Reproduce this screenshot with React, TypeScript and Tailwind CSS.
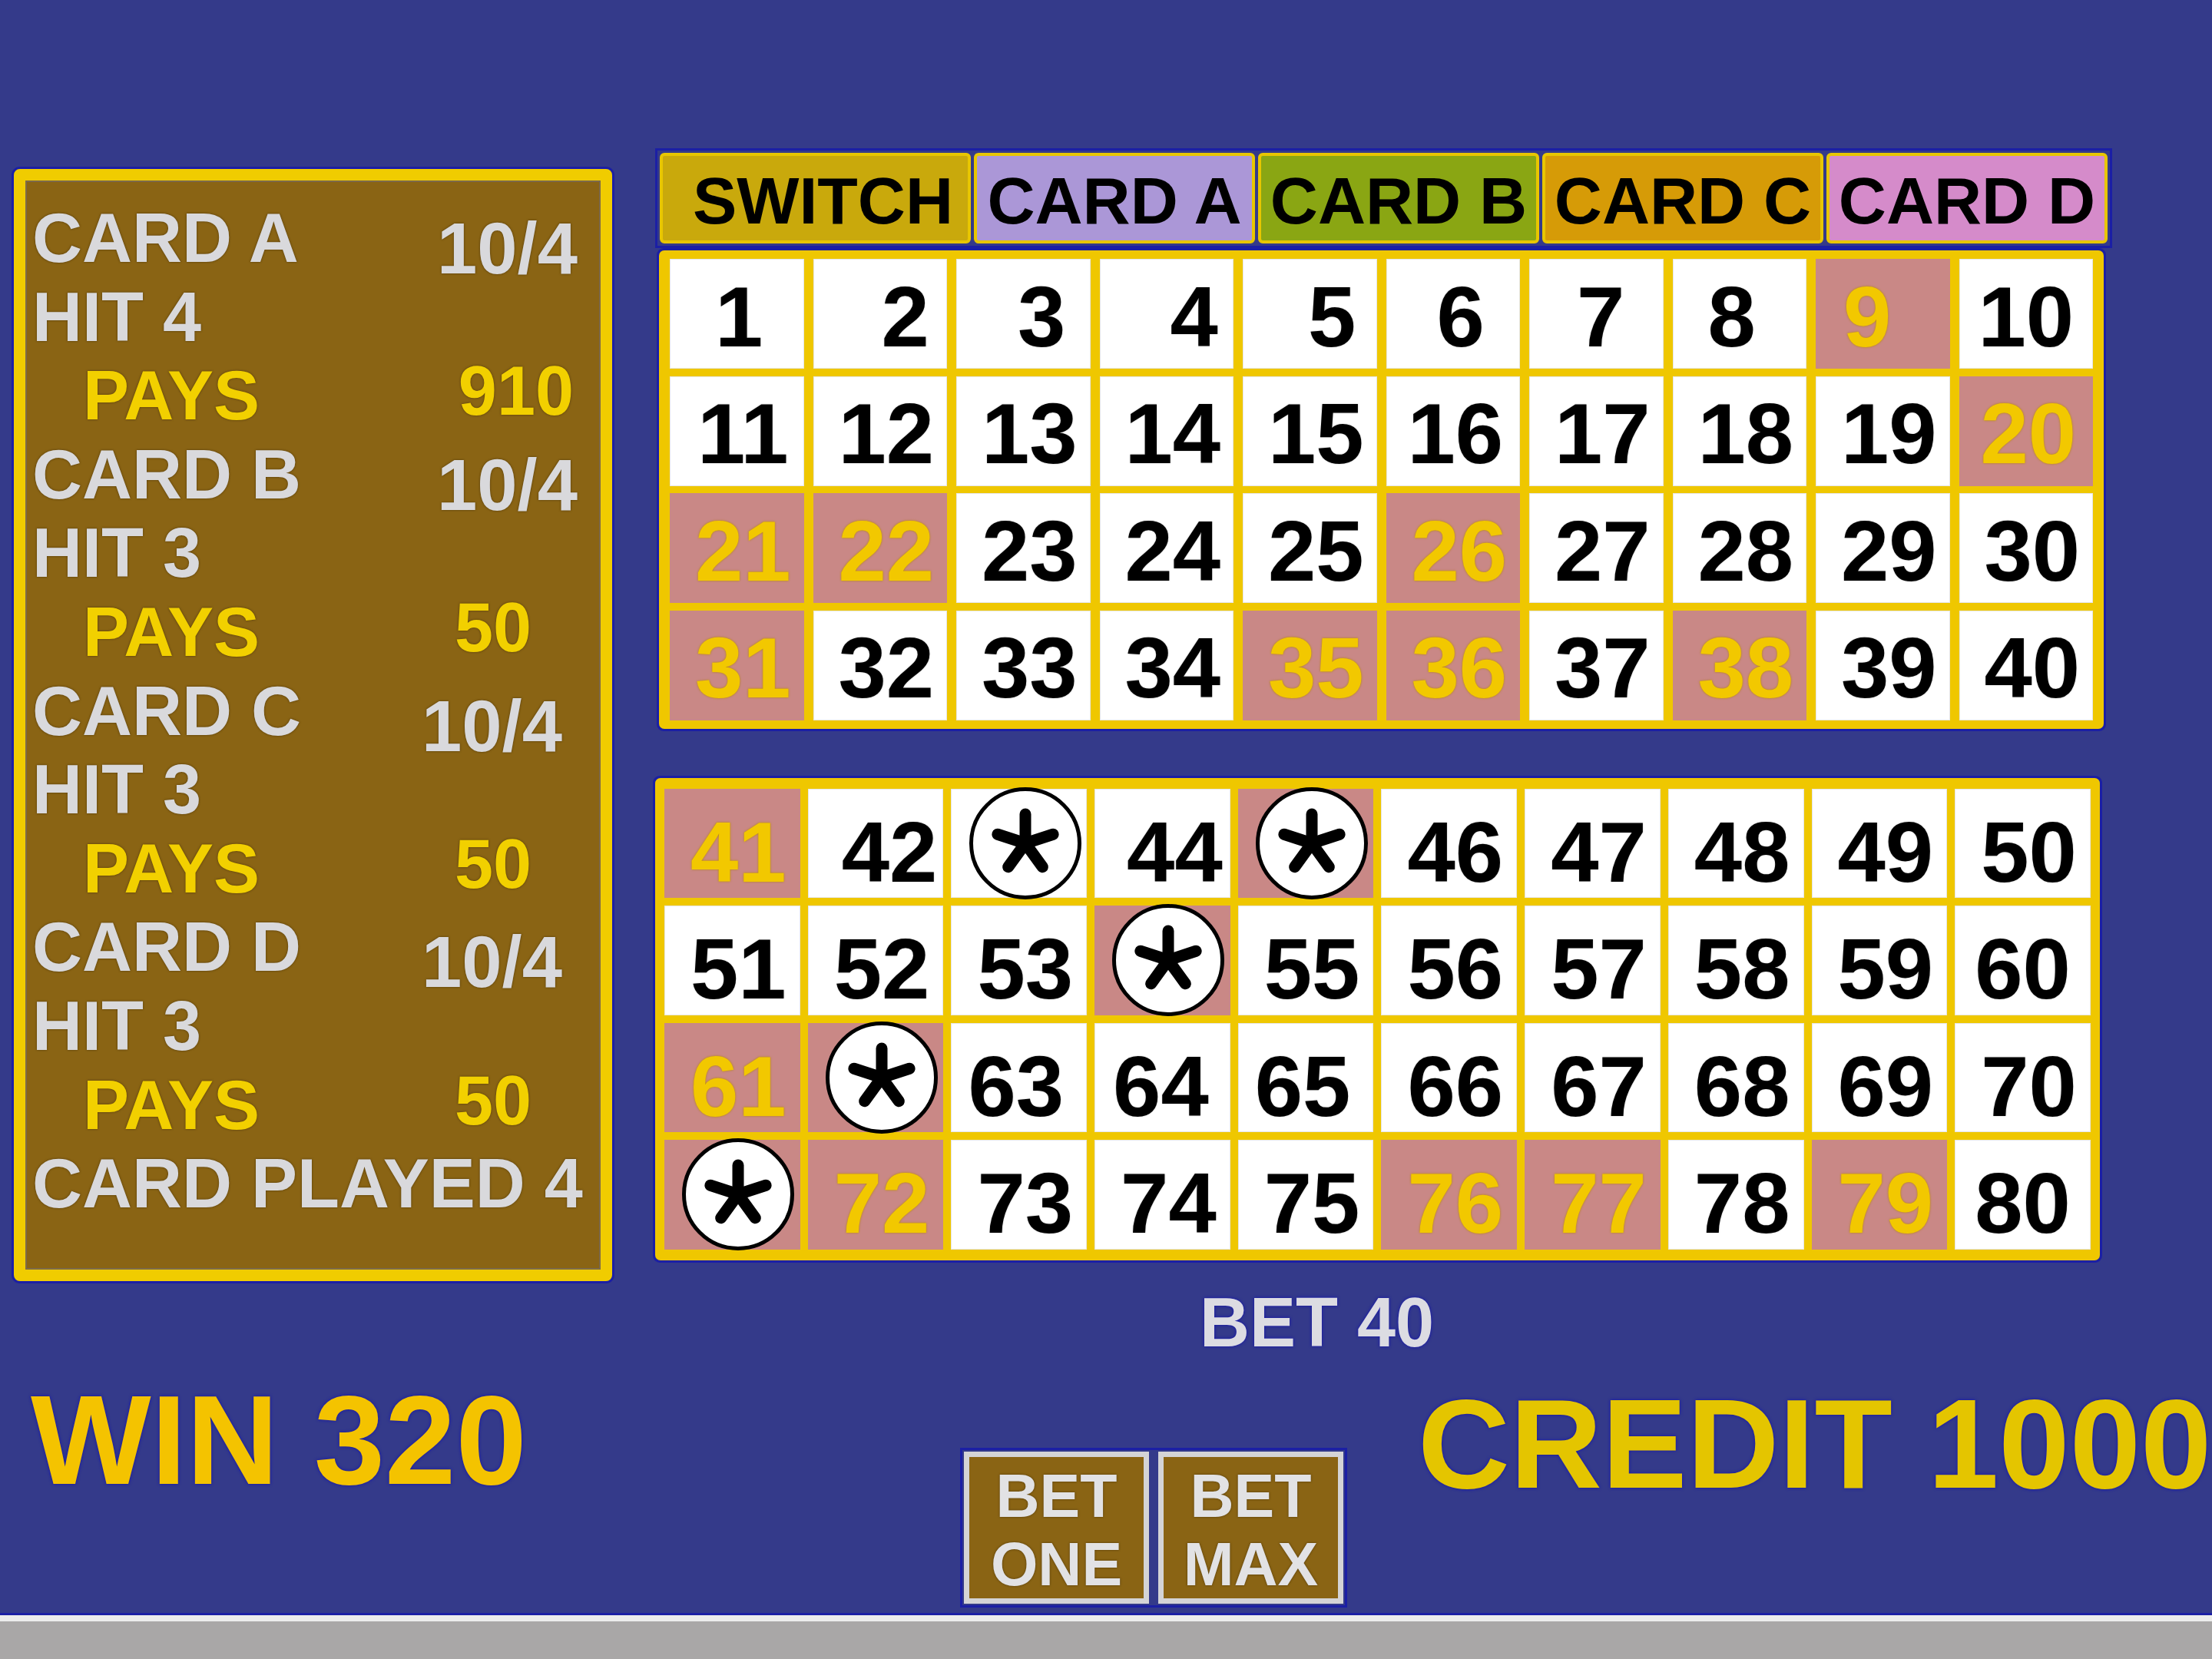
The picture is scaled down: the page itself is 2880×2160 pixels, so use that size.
import React from 'react'

// Keno board: pay table on the left, 80-number board on the right, bet/credit strip below.

const HOT = new Set([9, 20, 21, 22, 26, 31, 35, 36, 38, 41, 45, 54, 61, 62, 71, 72, 76, 77, 79])
const STARS = new Set([43, 45, 54, 62, 71])

// small horizontal nudges, the digits are not centred the same way in every cell
const NUDGE: Record<number, string> = {
  1: 'pl-[6px]',
  2: 'pl-[66px]',
  3: 'pl-[48px]',
  4: 'pl-[72px]',
  5: 'pl-[58px]',
  6: 'pl-[20px]',
  7: 'pl-[12px]',
  8: 'pr-[20px]',
  9: 'pr-[40px]',
  10: 'pl-0',
  16: 'pl-[6px]',
  20: 'pl-[6px]',
  42: 'pl-[36px]',
  44: 'pl-[32px]',
  60: 'pl-0',
  63: 'pr-[8px]',
  64: 'pr-[4px]',
  65: 'pr-[8px]',
  80: 'pl-0',
}

const HEADS = [
  { t: 'SWITCH', cls: 'w-[405px] bg-[#c9a90c] pl-[20px]' },
  { t: 'CARD A', cls: 'w-[366px] bg-[#ab97d7]' },
  { t: 'CARD B', cls: 'w-[366px] bg-[#8aa613]' },
  { t: 'CARD C', cls: 'w-[366px] bg-[#d69b07]' },
  { t: 'CARD D', cls: 'w-[366px] bg-[#d58bca]' },
]

type Row = { label: string; value?: string; pays?: boolean; vcls?: string }

const PAYTABLE: Row[] = [
  { label: 'CARD A', value: '10/4', vcls: 'pr-[28px] pt-[14px]' },
  { label: 'HIT 4' },
  { label: 'PAYS', pays: true, value: '910', vcls: 'pr-[33px] -mt-[6px]' },
  { label: 'CARD B', value: '10/4', vcls: 'pr-[28px] pt-[14px]' },
  { label: 'HIT 3' },
  { label: 'PAYS', pays: true, value: '50', vcls: 'pr-[88px] -mt-[6px]' },
  { label: 'CARD C', value: '10/4', vcls: 'pr-[48px] pt-[20px]' },
  { label: 'HIT 3' },
  { label: 'PAYS', pays: true, value: '50', vcls: 'pr-[88px] -mt-[6px]' },
  { label: 'CARD D', value: '10/4', vcls: 'pr-[48px] pt-[20px]' },
  { label: 'HIT 3' },
  { label: 'PAYS', pays: true, value: '50', vcls: 'pr-[88px] -mt-[6px]' },
  { label: 'CARD PLAYED 4' },
]

function Asterisk() {
  const arms = [-90, -18, 54, 126, 198].map((a) => {
    const r = (a * Math.PI) / 180
    return [Math.cos(r) * 38, Math.sin(r) * 38]
  })
  return (
    <svg viewBox="-50 -50 100 100" className="w-[100px] h-[100px]">
      {arms.map(([x, y], i) => (
        <line key={i} x1={0} y1={0} x2={x} y2={y} stroke="#000" strokeWidth={15} strokeLinecap="round" />
      ))}
    </svg>
  )
}

function Cell({ n, lower }: { n: number; lower?: boolean }) {
  const hot = HOT.has(n)
  return (
    <div
      className={`flex items-center justify-center ${
        hot ? 'bg-[#c98886]' : 'bg-white border border-[#e6e6e6]'
      }`}
    >
      {STARS.has(n) ? (
        <div className="shrink-0 ml-[16px] w-[146px] h-[146px] rounded-full border-[5px] border-black bg-white flex items-center justify-center">
          <Asterisk />
        </div>
      ) : (
        <span
          className={`${NUDGE[n] ?? 'pl-[16px]'} ${lower ? 'pt-[24px]' : 'pt-[8px]'} text-[112px] leading-none ${
            hot ? 'text-[#f2c800] [text-shadow:0_0_3px_#b58600]' : 'text-black [text-shadow:0_0_2px_rgba(0,0,0,0.25)]'
          }`}
        >
          {n}
        </span>
      )}
    </div>
  )
}

function PayTable() {
  return (
    <div className="ml-[18px] mt-[220px] w-[779px] h-[1448px] rounded-[8px] border-[15px] border-[#f0cc00] shadow-[0_0_0_3px_#1b1fa5]">
      <div className="h-full bg-[#8a6414] border-[2px] border-[#7d6a48] pl-[7px] pt-[22px]">
        {PAYTABLE.map((r, i) => (
          <div key={i} className="flex justify-between items-start h-[102.6px]">
            <span
              className={`text-[90px] leading-[102.6px] whitespace-nowrap [text-shadow:0_0_3px_rgba(40,25,0,0.6)] ${
                r.pays ? 'pl-[66px] text-[#f2d000]' : 'text-[#d9d9dc]'
              }`}
            >
              {r.label}
            </span>
            {r.value && (
              <span
                className={`${r.vcls} leading-[102.6px] [text-shadow:0_0_3px_rgba(40,25,0,0.6)] ${
                  r.pays ? 'text-[90px] text-[#f2d000]' : 'text-[94px] text-[#d9d9dc]'
                }`}
              >
                {r.value}
              </span>
            )}
          </div>
        ))}
      </div>
    </div>
  )
}

function Board() {
  const top = Array.from({ length: 40 }, (_, i) => i + 1)
  const bottom = Array.from({ length: 40 }, (_, i) => i + 41)
  return (
    <div className="ml-[56px] mt-[193px] flex flex-col">
      {/* header tabs */}
      <div className="w-fit border-[3px] border-[#1b1fa5] p-[3px] flex gap-[4px]">
        {HEADS.map((h) => (
          <div
            key={h.t}
            className={`${h.cls} h-[118px] pt-[6px] border-[4px] border-[#e8c600] rounded-[6px] flex items-center justify-center text-[86px] leading-none text-black whitespace-nowrap`}
          >
            {h.t}
          </div>
        ))}
      </div>

      {/* 1 - 40 */}
      <div className="ml-[2px] w-fit border-[3px] border-[#1b1fa5] rounded-[9px]">
        <div className="bg-[#efc700] rounded-[7px] px-[14px] py-[11px]">
          <div className="grid grid-cols-[repeat(10,174.5px)] auto-rows-[143px] gap-x-[12px] gap-y-[9.5px]">
            {top.map((n) => (
              <Cell key={n} n={n} />
            ))}
          </div>
        </div>
      </div>

      {/* 41 - 80 */}
      <div className="-ml-[3px] mt-[58px] w-fit border-[3px] border-[#1b1fa5] rounded-[9px]">
        <div className="bg-[#efc700] rounded-[7px] px-[12px] py-[14px]">
          <div className="grid grid-cols-[repeat(10,176.7px)] auto-rows-[142.5px] gap-x-[10px] gap-y-[10px]">
            {bottom.map((n) => (
              <Cell key={n} n={n} lower />
            ))}
          </div>
        </div>
      </div>

      <p className="ml-[709px] mt-[33px] text-[90px] leading-none text-[#dcdce2] whitespace-nowrap [text-shadow:0_0_4px_#1010b0]">
        BET 40
      </p>
    </div>
  )
}

function BetButton({ top, bottom }: { top: string; bottom: string }) {
  return (
    <div className="w-[241px] h-[198px] border-[7px] border-[#d4d4d6] bg-[#8a6414] flex flex-col items-center justify-center pt-[6px] text-[79px] leading-[89px] text-[#e2e2e4] [text-shadow:0_0_3px_rgba(40,25,0,0.6)]">
      <span>{top}</span>
      <span>{bottom}</span>
    </div>
  )
}

export default function App() {
  return (
    <div className="w-[2880px] h-[2160px] overflow-hidden bg-[#343a8a] flex flex-col font-['Liberation_Sans',Arial,sans-serif] font-bold">
      <div className="h-[1780px] flex items-start">
        <PayTable />
        <Board />
      </div>

      <div className="h-[320px] grid grid-cols-[1250px_510px_1fr] items-start">
        <p className="pl-[40px] pt-[12px] text-[166px] leading-none text-[#f4c300] whitespace-nowrap [text-shadow:0_0_4px_#1010b0]">
          WIN 320
        </p>
        <div className="mt-[105px] w-fit border-[3px] border-[#1b1fa5] p-[2px] flex gap-[12px]">
          <BetButton top="BET" bottom="ONE" />
          <BetButton top="BET" bottom="MAX" />
        </div>
        <p className="pl-[86px] pt-[17px] text-[166px] leading-none text-[#e4c500] whitespace-nowrap [text-shadow:0_0_4px_#1010b0]">
          CREDIT 1000
        </p>
      </div>

      <div className="h-[60px] border-t-[3px] border-[#1b1fa5]">
        <div className="h-full border-t-[8px] border-[#ececec] bg-[#a9a7a7]" />
      </div>
    </div>
  )
}
